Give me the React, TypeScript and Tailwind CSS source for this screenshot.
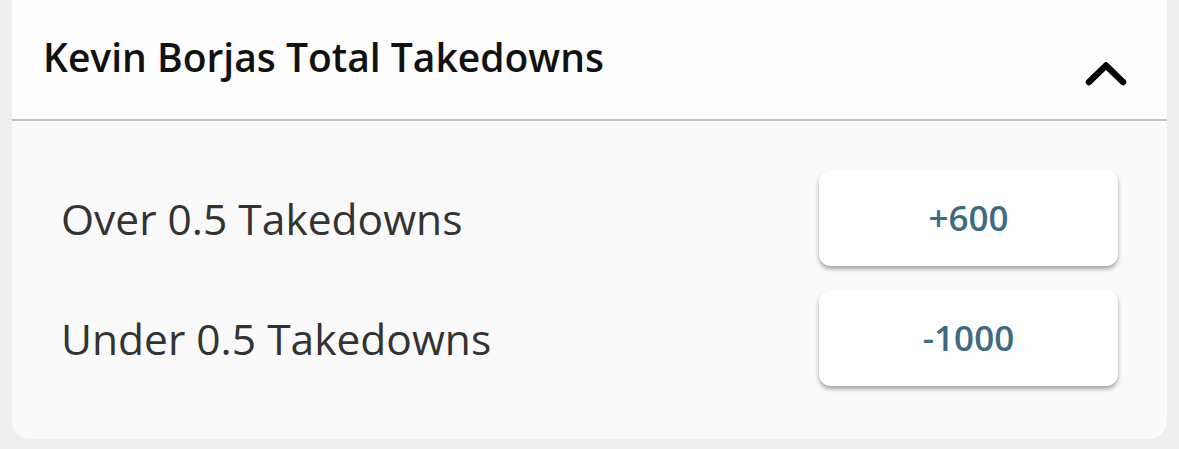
import { useState } from 'react';

const options = [
  { label: 'Over 0.5 Takedowns', odds: '+600' },
  { label: 'Under 0.5 Takedowns', odds: '-1000' },
];

const App = () => {
  const [open, setOpen] = useState(true);

  return (
    <div className="min-h-screen bg-[#efefef] px-[12px] font-['Open_Sans',sans-serif]">
      <div className="w-full h-[439px] bg-[#fafafa] rounded-b-[18px] overflow-hidden flex flex-col">
        {/* header */}
        <div className="h-[119px] bg-[#fefefe] flex items-start justify-between pl-[31px] pr-[38px]">
          <h2 className="mt-[34px] text-[39px] leading-[46px] font-semibold text-[#111]">
            Kevin Borjas Total Takedowns
          </h2>
          <button onClick={() => setOpen(!open)} className="mt-[58px] p-0">
            <svg width="46" height="30" viewBox="0 0 46 30" fill="none">
              <path d="M6 24 L23 7.5 L40 24" stroke="#000" strokeWidth="6.5" strokeLinecap="round" strokeLinejoin="round" />
            </svg>
          </button>
        </div>
        <div className="h-[2px] bg-[#c4c4c4]" />

        {/* options */}
        {open && (
          <div className="flex flex-col gap-[24px] pt-[49px] pl-[49px] pr-[49px]">
            {options.map((o) => (
              <div key={o.label} className="flex items-center justify-between">
                <span className="text-[42.5px] leading-[50px] text-[#333] pt-[2px]">{o.label}</span>
                <button className="w-[299px] h-[96px] bg-white rounded-[12px] shadow-[0_3px_4px_rgba(0,0,0,0.35)] text-[35px] font-semibold text-[#3d6b82]">
                  {o.odds}
                </button>
              </div>
            ))}
          </div>
        )}
      </div>
    </div>
  );
};

export default App;
